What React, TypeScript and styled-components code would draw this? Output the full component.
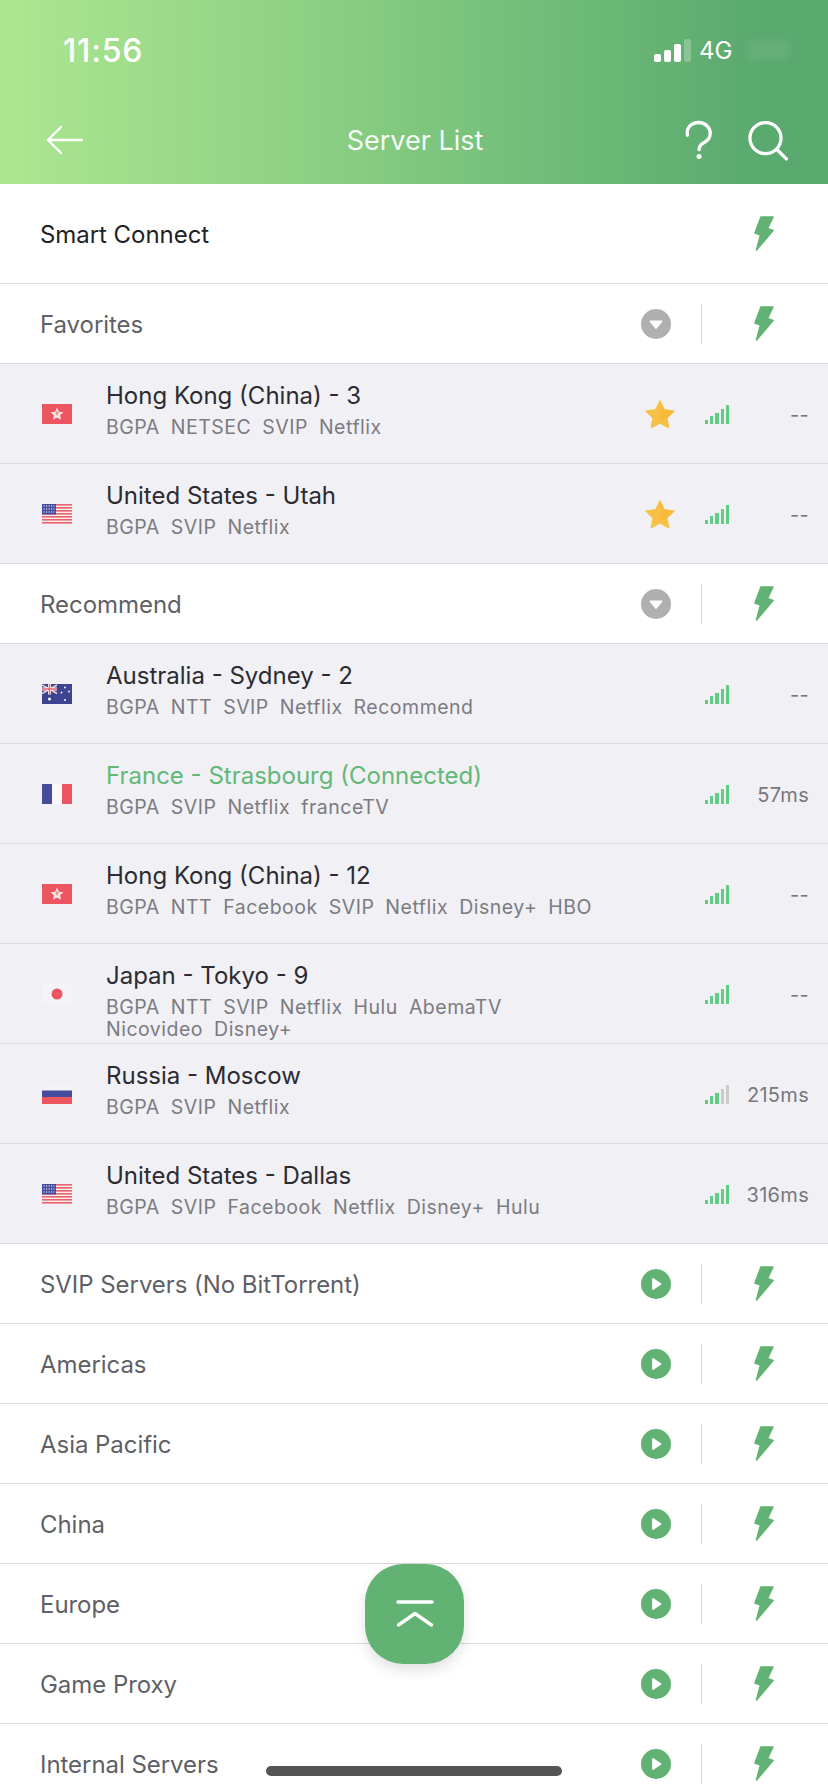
import React from 'react'
import styled, { createGlobalStyle } from 'styled-components'

const GREEN = '#62b273'

const GlobalStyle = createGlobalStyle`
  html, body {
    margin: 0;
    padding: 0;
    background: #fff;
    font-family: Inter, "Liberation Sans", sans-serif;
  }
  body {
    height: 1792px;
    overflow: hidden;
  }
`

const Screen = styled.div`
  position: relative;
  width: 828px;
  height: 1792px;
  overflow: hidden;
  background: #fff;
`

const Header = styled.header`
  height: 184px;
  background: linear-gradient(90deg, #ade791 0%, #93d586 30%, #78c27b 58%, #5aa96f 92%, #5aa96f 100%);
  color: #fff;
`

const StatusBar = styled.div`
  display: flex;
  align-items: center;
  height: 100px;
  padding: 0 38px 0 63px;
`

const Clock = styled.span`
  flex: 1;
  font-size: 32px;
  font-weight: 500;
  letter-spacing: 0.8px;
`

const CellBars = styled.div`
  display: flex;
  align-items: flex-end;
  gap: 3px;
  height: 23px;
  margin-right: 8px;
`

const CellBar = styled.i<{ $h: number; $dim?: boolean }>`
  display: block;
  width: 7px;
  height: ${({ $h }) => $h}px;
  border-radius: 2px;
  background: ${({ $dim }) => ($dim ? 'rgba(255,255,255,0.25)' : '#fff')};
`

const Network = styled.span`
  font-size: 24px;
  font-weight: 400;
  width: 49px;
`

const BlurredBattery = styled.i`
  display: block;
  width: 42px;
  height: 20px;
  background: rgba(255, 255, 255, 0.07);
  filter: blur(3px);
`

const NavBar = styled.nav`
  display: flex;
  align-items: center;
  height: 84px;
  padding: 0 40px 38px 46px;
  margin-top: -2px;
`

const NavSide = styled.div`
  display: flex;
  align-items: center;
  gap: 37px;
  width: 104px;
  flex-shrink: 0;
`

const NavRight = styled(NavSide)`
  justify-content: flex-end;
`

const NavTitle = styled.h1`
  flex: 1;
  margin: 0;
  padding-right: 4px;
  text-align: center;
  font-size: 27px;
  font-weight: 400;
  color: rgba(255, 255, 255, 0.95);
`

const CategoryRow = styled.div<{ $tall?: boolean }>`
  display: flex;
  align-items: center;
  height: ${({ $tall }) => ($tall ? 99 : 79)}px;
  padding-left: 40px;
  background: #fff;
  border-bottom: 1px solid #d9d9dc;
`

const CategoryName = styled.span<{ $dark?: boolean }>`
  flex: 1;
  padding-top: 2px;
  font-size: 24px;
  letter-spacing: -0.05px;
  color: ${({ $dark }) => ($dark ? '#1f1f24' : '#5f5f66')};
`

const ToggleSlot = styled.div`
  display: flex;
  width: 30px;
  height: 30px;
  margin-right: 30px;
`

const Divider = styled.i`
  display: block;
  width: 1px;
  height: 40px;
  background: #d9d9dc;
`

const BoltSlot = styled.div`
  display: flex;
  justify-content: center;
  width: 124px;
  padding-right: 2px;
`

const ServerRow = styled.div`
  display: flex;
  height: 99px;
  background: #f0f0f5;
  border-bottom: 1px solid #dcdce1;
  overflow: hidden;
`

const FlagSlot = styled.div`
  display: flex;
  align-items: center;
  width: 30px;
  height: 20px;
  margin: 40px 34px 0 42px;
  flex-shrink: 0;
`

const ServerText = styled.div`
  flex: 1;
  min-width: 0;
  padding-top: 16px;
`

const ServerName = styled.div<{ $active?: boolean }>`
  height: 32px;
  line-height: 32px;
  font-size: 24px;
  color: ${({ $active }) => ($active ? '#62b878' : '#2b2b31')};
`

const TagList = styled.div`
  display: flex;
  flex-wrap: wrap;
  column-gap: 11px;
  max-width: 500px;
  margin-top: 4px;
`

const Tag = styled.span`
  line-height: 22px;
  font-size: 19.5px;
  letter-spacing: 0.5px;
  color: #7b7b82;
`

const ServerMeta = styled.div`
  display: flex;
  align-items: center;
  flex-shrink: 0;
  padding-right: 19px;
`

const StarSlot = styled.div`
  display: flex;
  width: 32px;
  height: 30px;
  margin-right: 29px;
`

const SignalSlot = styled.div`
  display: flex;
  align-items: flex-end;
  gap: 2px;
  width: 24px;
  height: 20px;
`

const SignalBar = styled.i<{ $h: number; $off?: boolean }>`
  display: block;
  flex: 1;
  height: ${({ $h }) => $h}px;
  background: ${({ $off }) => ($off ? '#c9cdc9' : '#62cb85')};
`

const Latency = styled.span`
  width: 80px;
  padding-top: 2px;
  text-align: right;
  font-size: 20px;
  letter-spacing: 0.3px;
  color: #77777e;
`

const TopButton = styled.button`
  position: absolute;
  left: 365px;
  top: 1564px;
  display: flex;
  align-items: center;
  justify-content: center;
  width: 99px;
  height: 100px;
  padding: 0;
  border: 0;
  border-radius: 38px;
  background: ${GREEN};
  box-shadow: 0 6px 14px rgba(0, 0, 0, 0.12);
`

const HomeIndicator = styled.i`
  position: absolute;
  left: 266px;
  top: 1766px;
  display: block;
  width: 296px;
  height: 10px;
  border-radius: 5px;
  background: #555;
`

const BackIcon = () => (
  <svg width="38" height="30" viewBox="0 0 38 30" fill="none" stroke="#fff" strokeWidth="2.4" strokeLinecap="round" strokeLinejoin="round">
    <path d="M36 15H2M15 2 2 15l13 13" />
  </svg>
)

const HelpIcon = () => (
  <svg width="28" height="40" viewBox="0 0 28 40" fill="none" stroke="#fff" strokeWidth="3.4" strokeLinecap="round" style={{ transform: 'translateX(1px)' }}>
    <path d="M2.5 15C1 7 7 2 14 2c7 0 12 5 12 11 0 5-3 8-7 10-3 1.500-4.500 4-4.500 7" />
    <circle cx="14.500" cy="37" r="2.600" fill="#fff" stroke="none" />
  </svg>
)

const SearchIcon = () => (
  <svg width="41" height="41" viewBox="0 0 41 41" fill="none" stroke="#fff" strokeWidth="3.400" strokeLinecap="round">
    <circle cx="18" cy="18" r="16" />
    <path d="M30 30 39.500 39.500" />
  </svg>
)

const BoltIcon = () => (
  <svg width="22" height="37" viewBox="-1 -1 22 37" fill={GREEN} stroke={GREEN} strokeWidth="1.600" strokeLinejoin="round">
    <path d="M7 1h12l-5.500 11.500L19 14.500 2.500 34l4-15L1 17z" />
  </svg>
)

const ToggleDown = () => (
  <svg width="30" height="30" viewBox="0 0 30 30">
    <circle cx="15" cy="15" r="15" fill="#b0b0b2" />
    <path d="M9.500 12.500h11L15 19z" fill="#fff" stroke="#fff" strokeWidth="1.800" strokeLinejoin="round" />
  </svg>
)

const TogglePlay = () => (
  <svg width="30" height="30" viewBox="0 0 30 30">
    <circle cx="15" cy="15" r="15" fill={GREEN} />
    <path d="M12 10v10l7.500-5z" fill="#fff" stroke="#fff" strokeWidth="1.800" strokeLinejoin="round" />
  </svg>
)

const StarIcon = () => (
  <svg width="32" height="30" viewBox="0 0 32 30">
    <path d="M16 2l4.200 8.800 9.800 1.300-7.200 6.800 1.900 9.700L16 23.800 7.300 28.600l1.900-9.700L2 12.100l9.800-1.300z" fill="#f6c146" stroke="#f6c146" strokeWidth="1.400" strokeLinejoin="round" />
    <path d="M16 2l4.200 8.800 9.800 1.300-7.200 6.800-6.800 5z" fill="#f9b93a" />
  </svg>
)

const TopIcon = () => (
  <svg width="38" height="30" viewBox="0 0 38 30" fill="none" stroke="#fff" strokeWidth="3.400" strokeLinecap="round" strokeLinejoin="round">
    <path d="M2 3h34M2.500 26 19 14.500 35.500 26" />
  </svg>
)

type FlagCode = 'hk' | 'us' | 'au' | 'fr' | 'jp' | 'ru'

const Flag = ({ code }: { code: FlagCode }) => {
  if (code === 'hk') {
    return (
      <svg width="30" height="20" viewBox="0 0 30 20">
        <rect width="30" height="20" fill="#ec5660" />
        <path d="M15 3.500l1.900 4.300 4.600.400-3.500 3 1.100 4.600L15 13.400l-4.100 2.400 1.100-4.600-3.500-3 4.600-.400z" fill="#fbe6e6" />
        <path d="M15 6.500v5M13 9h4" stroke="#ec5660" strokeWidth="0.700" />
      </svg>
    )
  }
  if (code === 'us') {
    return (
      <svg width="30" height="20" viewBox="0 0 30 20">
        <rect width="30" height="20" fill="#fbeeee" />
        {[0, 3, 6, 9, 12, 15, 18].map((y) => (
          <rect key={y} y={y} width="30" height="1.600" fill="#e8636a" />
        ))}
        <rect width="14" height="10.500" fill="#454c9e" />
        <path d="M1.500 2h11M1.500 5h11M1.500 8h11" stroke="#fff" strokeWidth="1.200" strokeDasharray="1.200 1.300" />
      </svg>
    )
  }
  if (code === 'au') {
    return (
      <svg width="30" height="20" viewBox="0 0 30 20">
        <rect width="30" height="20" fill="#3c4590" />
        <path d="M0 1l15 8.500M15 1 0 9.500" stroke="#f3d5d8" strokeWidth="1.500" />
        <path d="M7.500 0v10.500M0 5h15" stroke="#fff" strokeWidth="3" />
        <path d="M7.500 0v10.500M0 5h15" stroke="#e8636a" strokeWidth="1.500" />
        <g fill="#fff">
          <circle cx="7.500" cy="15" r="1.500" />
          <circle cx="23" cy="3.500" r="0.900" />
          <circle cx="19.500" cy="8.500" r="0.900" />
          <circle cx="27" cy="7.500" r="0.900" />
          <circle cx="23" cy="16" r="1" />
        </g>
      </svg>
    )
  }
  if (code === 'fr') {
    return (
      <svg width="30" height="20" viewBox="0 0 30 20">
        <rect width="10" height="20" fill="#454c9e" />
        <rect x="10" width="10" height="20" fill="#fbf8f8" />
        <rect x="20" width="10" height="20" fill="#ec5660" />
      </svg>
    )
  }
  if (code === 'jp') {
    return (
      <svg width="30" height="20" viewBox="0 0 30 20">
        <rect width="30" height="20" fill="#f4f4f8" />
        <circle cx="15" cy="10" r="5.500" fill="#ec5660" />
      </svg>
    )
  }
  return (
    <svg width="30" height="20" viewBox="0 0 30 20">
      <rect width="30" height="6.500" fill="#f2f2f7" />
      <rect y="6.500" width="30" height="6.500" fill="#454c9e" />
      <rect y="13" width="30" height="7" fill="#ec5660" />
    </svg>
  )
}

const Signal = ({ level = 5 }: { level?: number }) => (
  <SignalSlot>
    {[4, 8, 11, 15, 19].map((h, i) => (
      <SignalBar key={h} $h={h} $off={i >= level} />
    ))}
  </SignalSlot>
)

type Server = {
  flag: FlagCode
  name: string
  tags: string[]
  latency: string
  star?: boolean
  active?: boolean
  level?: number
}

const favorites: Server[] = [
  { flag: 'hk', name: 'Hong Kong (China) - 3', tags: ['BGPA', 'NETSEC', 'SVIP', 'Netflix'], latency: '--', star: true },
  { flag: 'us', name: 'United States - Utah', tags: ['BGPA', 'SVIP', 'Netflix'], latency: '--', star: true },
]

const recommended: Server[] = [
  { flag: 'au', name: 'Australia - Sydney - 2', tags: ['BGPA', 'NTT', 'SVIP', 'Netflix', 'Recommend'], latency: '--' },
  { flag: 'fr', name: 'France - Strasbourg (Connected)', tags: ['BGPA', 'SVIP', 'Netflix', 'franceTV'], latency: '57ms', active: true },
  { flag: 'hk', name: 'Hong Kong (China) - 12', tags: ['BGPA', 'NTT', 'Facebook', 'SVIP', 'Netflix', 'Disney+', 'HBO'], latency: '--' },
  { flag: 'jp', name: 'Japan - Tokyo - 9', tags: ['BGPA', 'NTT', 'SVIP', 'Netflix', 'Hulu', 'AbemaTV', 'Nicovideo', 'Disney+'], latency: '--' },
  { flag: 'ru', name: 'Russia - Moscow', tags: ['BGPA', 'SVIP', 'Netflix'], latency: '215ms', level: 3 },
  { flag: 'us', name: 'United States - Dallas', tags: ['BGPA', 'SVIP', 'Facebook', 'Netflix', 'Disney+', 'Hulu'], latency: '316ms' },
]

const regions = ['SVIP Servers (No BitTorrent)', 'Americas', 'Asia Pacific', 'China', 'Europe', 'Game Proxy', 'Internal Servers']

const Category = ({ name, open }: { name: string; open?: boolean }) => (
  <CategoryRow>
    <CategoryName>{name}</CategoryName>
    <ToggleSlot>{open ? <ToggleDown /> : <TogglePlay />}</ToggleSlot>
    <Divider />
    <BoltSlot>
      <BoltIcon />
    </BoltSlot>
  </CategoryRow>
)

const ServerItem = ({ server }: { server: Server }) => (
  <ServerRow>
    <FlagSlot>
      <Flag code={server.flag} />
    </FlagSlot>
    <ServerText>
      <ServerName $active={server.active}>{server.name}</ServerName>
      <TagList>
        {server.tags.map((tag) => (
          <Tag key={tag}>{tag}</Tag>
        ))}
      </TagList>
    </ServerText>
    <ServerMeta>
      <StarSlot>{server.star && <StarIcon />}</StarSlot>
      <Signal level={server.level} />
      <Latency>{server.latency}</Latency>
    </ServerMeta>
  </ServerRow>
)

export default function App() {
  return (
    <Screen>
      <GlobalStyle />
      <Header>
        <StatusBar>
          <Clock>11:56</Clock>
          <CellBars>
            <CellBar $h={8} />
            <CellBar $h={12} />
            <CellBar $h={18} />
            <CellBar $h={23} $dim />
          </CellBars>
          <Network>4G</Network>
          <BlurredBattery />
        </StatusBar>
        <NavBar>
          <NavSide>
            <BackIcon />
          </NavSide>
          <NavTitle>Server List</NavTitle>
          <NavRight>
            <HelpIcon />
            <SearchIcon />
          </NavRight>
        </NavBar>
      </Header>
      <CategoryRow $tall>
        <CategoryName $dark>Smart Connect</CategoryName>
        <BoltSlot>
          <BoltIcon />
        </BoltSlot>
      </CategoryRow>
      <Category name="Favorites" open />
      {favorites.map((server) => (
        <ServerItem key={server.name} server={server} />
      ))}
      <Category name="Recommend" open />
      {recommended.map((server) => (
        <ServerItem key={server.name} server={server} />
      ))}
      {regions.map((name) => (
        <Category key={name} name={name} />
      ))}
      <TopButton>
        <TopIcon />
      </TopButton>
      <HomeIndicator />
    </Screen>
  )
}
